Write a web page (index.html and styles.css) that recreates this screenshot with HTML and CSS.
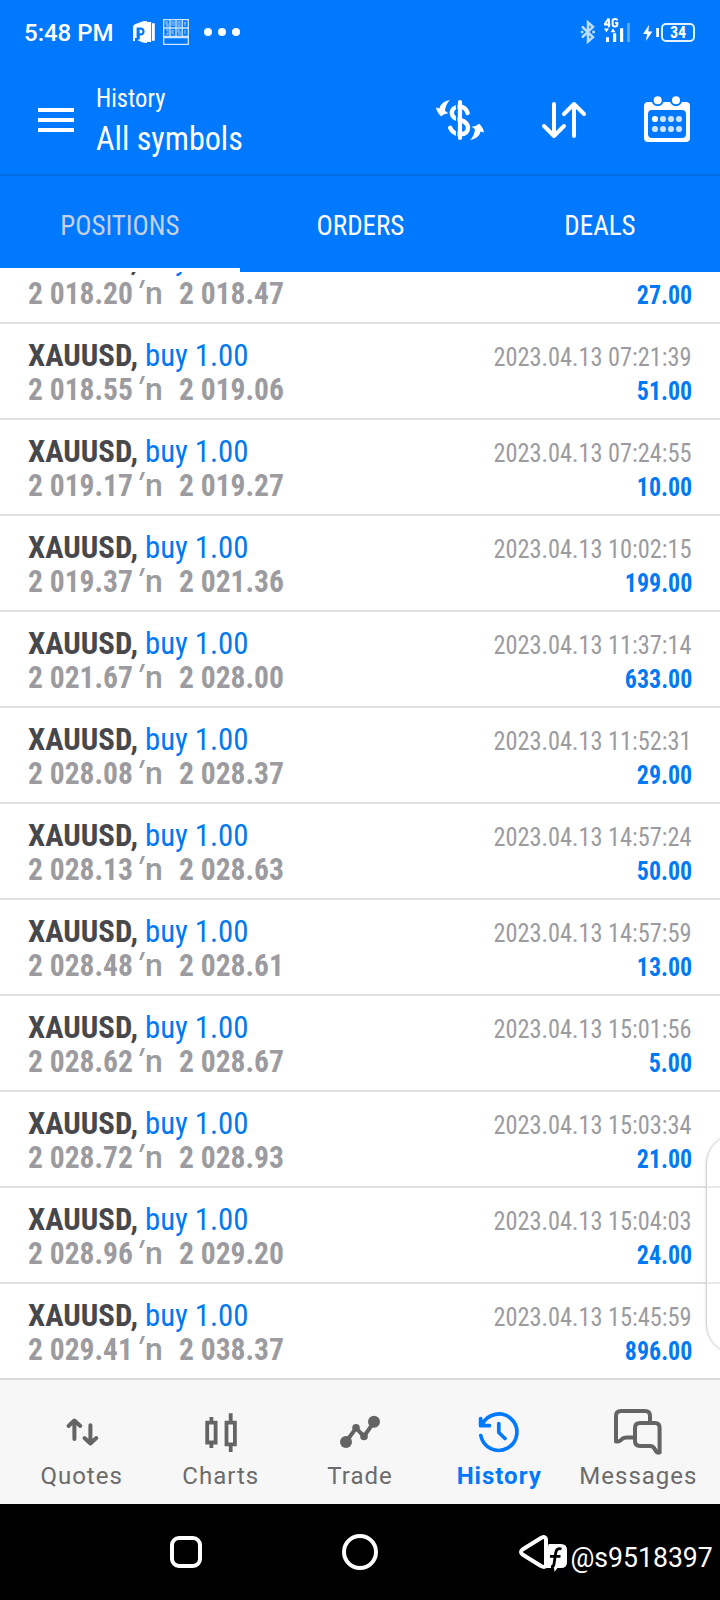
FILE: index.html
```html
<!DOCTYPE html>
<html lang="en">
<head>
<meta charset="utf-8">
<title>History</title>
<link rel="stylesheet" href="styles.css">
</head>
<body>
<div class="screen">
  <div class="status">
    <div class="status-left">
      <span class="clock">5:48 PM</span>
      <svg class="ic-p" width="24" height="26" viewBox="0 0 24 26">
        <path d="M3 5.200L11 2.200 15 2V24L11 23.600 6 21.600V19H3V22H1V7Z" fill="#fff"/>
        <path d="M4.600 8.500h4.600q3.400.4 3.400 4t-3.400 4H7.800V20.500H4.600Z" fill="#0079ff"/>
        <path d="M7.600 10.800h1.600q1.200.2 1.200 1.700t-1.200 1.700H7.600Z" fill="#fff"/>
        <path d="M15 3h4.200v20h-4.200ZM20 4.200h2.800v17.600H20Z" fill="#fff"/>
      </svg>
      <svg class="ic-keys" width="26" height="26" viewBox="0 0 26 26" fill="none" stroke="#cfe5ff" stroke-width="1.300">
        <path d="M.7.7H25.300V25.300H.7ZM.7 9H25.300M.7 17.300H25.300M7 .7V17.300M13 .7V17.300M19.200 .7V17.300M.7 18.600H25.300"/>
        <path opacity=".6" d="M5 3H3v2h2v2H3M9 7V3h2v4M15 3v4h2V3ZM21 3l1 2 1-2M22 5v2M3 11h2v4H3M9 11v4M11 11l-2 2 2 2M17 11h-2v2h2v2h-2M22 11v4"/>
      </svg>
      <svg class="ic-dots" width="36" height="8" viewBox="0 0 36 8" fill="#fff"><circle cx="4" cy="4" r="4"/><circle cx="18" cy="4" r="4"/><circle cx="32" cy="4" r="4"/></svg>
    </div>
    <div class="status-right">
      <svg width="16" height="24" viewBox="0 0 16 24" fill="none" stroke="#bddcff" stroke-width="2.500"><path d="M2 6.500L13 17.200 8 21.500V2.500L13 6.800 2 17.500"/><path d="M.8 12h2.600M12.200 12H15"/></svg>
      <svg class="ic-signal" width="27" height="26" viewBox="0 0 27 26" fill="#fff">
        <path d="M4.600 .5L1 5.800V6.600H6.200M4.900 .5V9.200M13.300 2.500Q13 1 11 1 8.600 1 8.600 3.300V6.300Q8.600 8.500 11 8.500 13.300 8.500 13.300 6.500V5H11" fill="none" stroke="#fff" stroke-width="2"/>
        <path d="M0 10.500H5L2.500 14.300ZM6.500 14.300H11.500L9 10.500Z"/>
        <path d="M2 19.300h3V24H2ZM9 15.300h3.200V24H9ZM16 10.300h3.200V24H16Z"/>
        <path d="M23 5h3v19h-3Z" opacity=".35"/>
      </svg>
      <svg class="ic-bolt" width="17" height="20" viewBox="0 0 17 20" fill="#fff"><path d="M6 2L0 11H4L3 18 9.400 8.600H5.400Z"/><path d="M13.200 5h2.800v9h-2.800Z"/></svg>
      <span class="battery">34</span>
    </div>
  </div>

  <header class="bar">
    <svg width="36" height="24" viewBox="0 0 36 24" fill="#fff"><path d="M0 0h36v4H0ZM0 10h36v4H0ZM0 20h36v4H0Z"/></svg>
    <div class="titles">
      <div class="subtitle">History</div>
      <div class="title">All symbols</div>
    </div>
    <div class="actions">
      <svg width="48" height="48" viewBox="0 0 48 48">
        <path d="M31.600 17Q29.500 10.600 24 10.600C19.500 10.600 15.800 12.800 15.800 17C15.800 21.500 20 23 24 24C28.500 25.200 32 27 32 31.500C32 36.500 28.500 38.300 24 38.300Q17 38 14.200 31.800" fill="none" stroke="#fff" stroke-width="4.400" stroke-linecap="round"/>
        <path d="M20.700 6V42" stroke="#0079ff" stroke-width="1.600"/>
        <path d="M24 6V42" stroke="#fff" stroke-width="4.200" stroke-linecap="round"/>
        <g fill="#fff"><path id="swap" d="M13.800 4C8 5 4 8.500 3.600 12.500L0 11.600Q1 17 5 20.300Q8 17.500 12.300 17.200L9 14.800Q9.600 8.500 13.800 4Z"/><use href="#swap" transform="rotate(180 24 24)"/></g>
      </svg>
      <svg width="48" height="48" viewBox="0 0 48 48" fill="none" stroke="#fff" stroke-width="4" stroke-linecap="round" stroke-linejoin="round"><path d="M14 8V40M4 30L14 40 24 30M34 40V8M24 18L34 8 44 18"/></svg>
      <svg class="ic-cal" width="48" height="48" viewBox="0 0 48 48">
        <rect x="1" y="6" width="46" height="40" rx="4" fill="#fff"/>
        <rect x="5" y="14" width="38" height="28" rx="4" fill="#0079ff"/>
        <g fill="#fff" stroke="#0079ff" stroke-width="2"><circle cx="14.700" cy="4.200" r="5"/><circle cx="33" cy="4.200" r="5"/></g>
        <g fill="#c8e2ff"><circle cx="12" cy="23" r="3.100" fill="#fff"/><circle cx="20" cy="23" r="3.100"/><circle cx="28" cy="23" r="3.100"/><circle cx="36" cy="23" r="3.100"/><circle cx="12" cy="33" r="3.100"/><circle cx="20" cy="33" r="3.100"/><circle cx="28" cy="33" r="3.100"/><circle cx="36" cy="33" r="3.100"/></g>
      </svg>
    </div>
  </header>

  <nav class="tabs">
    <div class="tab tab-on"><span>POSITIONS</span></div>
    <div class="tab"><span>ORDERS</span></div>
    <div class="tab"><span>DEALS</span></div>
  </nav>

  <main class="list">
    <div class="row"><div class="line"><b class="sym">XAUUSD,</b><span class="side">buy 1.00</span></div><div class="line"><span class="price">2 018.20</span><span class="to"><i>′</i>n</span><span class="price">2 018.47</span><b class="profit">27.00</b></div></div>
    <div class="row"><div class="line"><b class="sym">XAUUSD,</b><span class="side">buy 1.00</span><span class="time">2023.04.13 07:21:39</span></div><div class="line"><span class="price">2 018.55</span><span class="to"><i>′</i>n</span><span class="price">2 019.06</span><b class="profit">51.00</b></div></div>
    <div class="row"><div class="line"><b class="sym">XAUUSD,</b><span class="side">buy 1.00</span><span class="time">2023.04.13 07:24:55</span></div><div class="line"><span class="price">2 019.17</span><span class="to"><i>′</i>n</span><span class="price">2 019.27</span><b class="profit">10.00</b></div></div>
    <div class="row"><div class="line"><b class="sym">XAUUSD,</b><span class="side">buy 1.00</span><span class="time">2023.04.13 10:02:15</span></div><div class="line"><span class="price">2 019.37</span><span class="to"><i>′</i>n</span><span class="price">2 021.36</span><b class="profit">199.00</b></div></div>
    <div class="row"><div class="line"><b class="sym">XAUUSD,</b><span class="side">buy 1.00</span><span class="time">2023.04.13 11:37:14</span></div><div class="line"><span class="price">2 021.67</span><span class="to"><i>′</i>n</span><span class="price">2 028.00</span><b class="profit">633.00</b></div></div>
    <div class="row"><div class="line"><b class="sym">XAUUSD,</b><span class="side">buy 1.00</span><span class="time">2023.04.13 11:52:31</span></div><div class="line"><span class="price">2 028.08</span><span class="to"><i>′</i>n</span><span class="price">2 028.37</span><b class="profit">29.00</b></div></div>
    <div class="row"><div class="line"><b class="sym">XAUUSD,</b><span class="side">buy 1.00</span><span class="time">2023.04.13 14:57:24</span></div><div class="line"><span class="price">2 028.13</span><span class="to"><i>′</i>n</span><span class="price">2 028.63</span><b class="profit">50.00</b></div></div>
    <div class="row"><div class="line"><b class="sym">XAUUSD,</b><span class="side">buy 1.00</span><span class="time">2023.04.13 14:57:59</span></div><div class="line"><span class="price">2 028.48</span><span class="to"><i>′</i>n</span><span class="price">2 028.61</span><b class="profit">13.00</b></div></div>
    <div class="row"><div class="line"><b class="sym">XAUUSD,</b><span class="side">buy 1.00</span><span class="time">2023.04.13 15:01:56</span></div><div class="line"><span class="price">2 028.62</span><span class="to"><i>′</i>n</span><span class="price">2 028.67</span><b class="profit">5.00</b></div></div>
    <div class="row"><div class="line"><b class="sym">XAUUSD,</b><span class="side">buy 1.00</span><span class="time">2023.04.13 15:03:34</span></div><div class="line"><span class="price">2 028.72</span><span class="to"><i>′</i>n</span><span class="price">2 028.93</span><b class="profit">21.00</b></div></div>
    <div class="row"><div class="line"><b class="sym">XAUUSD,</b><span class="side">buy 1.00</span><span class="time">2023.04.13 15:04:03</span></div><div class="line"><span class="price">2 028.96</span><span class="to"><i>′</i>n</span><span class="price">2 029.20</span><b class="profit">24.00</b></div></div>
    <div class="row"><div class="line"><b class="sym">XAUUSD,</b><span class="side">buy 1.00</span><span class="time">2023.04.13 15:45:59</span></div><div class="line"><span class="price">2 029.41</span><span class="to"><i>′</i>n</span><span class="price">2 038.37</span><b class="profit">896.00</b></div></div>
  </main>

  <nav class="bottom">
    <div class="item">
      <svg width="48" height="48" viewBox="0 0 48 48" fill="none" stroke="#646464" stroke-width="4" stroke-linecap="round" stroke-linejoin="round"><path d="M16.400 31V12.700M10.500 18L16.400 12.500 22.300 18M32.400 17.300V35.500M26.500 30L32.400 35.500 38.300 30"/></svg>
      <span>Quotes</span>
    </div>
    <div class="item">
      <svg width="48" height="48" viewBox="0 0 48 48" fill="none" stroke="#646464" stroke-width="3.800"><path d="M10.200 14.700H18.600V34.500H10.200ZM29.500 14.700H37.900V36.300H29.500ZM14.400 9V14M14.400 35V40M33.700 5.300V14M33.700 37V44"/></svg>
      <span>Charts</span>
    </div>
    <div class="item">
      <svg width="48" height="48" viewBox="0 0 48 48" fill="#646464"><path d="M10 34L20 20 28 28.300 38 14" fill="none" stroke="#646464" stroke-width="4"/><circle cx="10" cy="34" r="6"/><circle cx="20" cy="19.800" r="3.800"/><circle cx="28" cy="28.400" r="3.800"/><circle cx="38" cy="13.700" r="6"/></svg>
      <span>Trade</span>
    </div>
    <div class="item item-on">
      <svg width="48" height="48" viewBox="0 0 48 48" fill="none" stroke="#0079ff" stroke-width="3.700" stroke-linecap="round" stroke-linejoin="round"><path d="M5.800 27.500A18.200 18.200 0 1 0 7.200 16.500M5.600 10.500V17.700H14.500M23.800 15.500V24.500L30 30.500"/></svg>
      <span>History</span>
    </div>
    <div class="item">
      <svg width="48" height="48" viewBox="0 0 48 48" fill="none" stroke="#646464" stroke-width="4" stroke-linejoin="round"><path d="M36 14V8Q36 3 31 3H7Q2 3 2 8V33.500Q6 34 8 31 9.500 29.500 13 29.500H20"/><path d="M26 15H41Q45.600 15 45.600 20V44.500Q43 45.500 41 41.500 39.500 38 36 38H26Q21 38 21 33V20Q21 15 26 15Z"/></svg>
      <span>Messages</span>
    </div>
  </nav>

  <div class="sys">
    <svg width="40" height="40" viewBox="0 0 40 40" fill="none" stroke="#fff" stroke-width="4"><rect x="6" y="6" width="28" height="28" rx="7"/></svg>
    <svg width="40" height="40" viewBox="0 0 40 40" fill="none" stroke="#fff" stroke-width="4"><circle cx="20" cy="20" r="16"/></svg>
    <svg width="40" height="40" viewBox="0 0 40 40" fill="none" stroke="#fff" stroke-width="4" stroke-linejoin="round"><path d="M8.500 17.500L27 6Q32 3.500 32 8V32Q32 36.500 27 34L8.500 22.500Q5.500 20 8.500 17.500Z"/></svg>
  </div>

  <div class="mark">
    <svg width="24" height="28" viewBox="0 0 24 28">
      <path d="M6 0H18Q24 0 24 6V18Q24 24 18 24H14.500L11.500 27.800 11 24H3Q5 20 5 16V6Q5 0 6 0Z" fill="#fff"/>
      <path d="M18.500 5Q13.500 3.500 12.700 9L11 20Q10.600 23 8 23M7 12.300H17.500" fill="none" stroke="#000" stroke-width="2.800"/>
    </svg>
    <span>@s9518397</span>
  </div>
  <div class="edge"></div>
</div>
</body>
</html>
```
FILE: styles.css
```css
* { box-sizing: border-box; }
body { margin: 0; font-family: "Roboto Condensed", Roboto, sans-serif; }
svg { display: block; flex: none; overflow: visible; }

.screen {
  position: relative;
  display: flex;
  flex-direction: column;
  width: 720px;
  height: 1600px;
  overflow: hidden;
  background: #fff;
}

.status {
  display: flex;
  justify-content: space-between;
  height: 64px;
  padding: 0 25px 0 24px;
  background: #0079ff;
  color: #fff;
  font-family: Roboto, sans-serif;
}
.status-left, .status-right { display: flex; align-items: center; }
.clock { width: 108px; padding-top: 1px; font-size: 24px; font-weight: 500; line-height: 64px; }
.ic-keys { margin-left: 7px; }
.ic-dots { margin-left: 15px; }
.ic-signal { margin: 0 0 2px 8px; }
.ic-bolt { margin: 1px 0 0 12px; }
.battery {
  width: 34px;
  height: 19px;
  margin-left: 1px;
  border: 2px solid #e4f1ff;
  border-radius: 5px;
  font: 700 16px/15px "Roboto Condensed", sans-serif;
  text-align: center;
}

.bar {
  display: flex;
  align-items: center;
  height: 112px;
  padding: 0 29px 0 38px;
  background: #0079ff;
  border-bottom: 2px solid #006ce4;
  color: #fff;
}
.bar > svg { margin-top: 2px; }
.titles { margin: 0 0 2px 22px; line-height: 40px; }
.subtitle, .title { transform: scaleX(.945); transform-origin: left; }
.subtitle { font-size: 26px; }
.title { padding-top: 1px; font-size: 34px; line-height: 39px; }
.actions { display: flex; gap: 56px; margin: 2px 0 0 auto; }
.ic-cal { margin-left: -1px; }

.tabs { display: grid; grid-template-columns: repeat(3, 1fr); height: 96px; background: #0079ff; color: #fff; }
.tab { padding-top: 7px; border-bottom: 4px solid transparent; font-size: 28px; line-height: 85px; text-align: center; }
.tab span { display: inline-block; transform: scaleX(.965); }
.tab-on { border-bottom-color: #fff; color: #c4d0e4; }

.list { display: flex; flex-direction: column; justify-content: flex-end; height: 1108px; overflow: hidden; }
.row { flex: none; height: 96px; padding: 14px 28px 0; border-bottom: 2px solid #e1e1e1; }
.row:last-child { border-bottom-color: #dadada; }
.line { display: flex; align-items: baseline; height: 34px; font-size: 32px; line-height: 34px; white-space: nowrap; }

/* Tighter than the condensed face's own width */
.sym, .side, .price { transform: scaleX(.96); transform-origin: left; }
.time, .profit { margin-left: auto; font-size: 26px; transform: scaleX(.936); transform-origin: right; }

.sym { width: 117px; color: #48484c; }
.side { color: #0079f4; }
.price { width: 111px; color: #9b9ba0; font-weight: 700; transform: scaleX(.923); }
.to { width: 40px; color: #9b9ba0; font: 500 32px/34px Roboto, sans-serif; }
.to i { display: inline-block; width: 6px; font-style: normal; transform: translateX(-3px) skewX(-20deg); }
.time { color: #9b9ba0; }
.profit { color: #0079f4; transform: scaleX(.92); }

.bottom { display: grid; grid-template-columns: repeat(5, 1fr); height: 124px; padding: 28px 12px 0; background: #f7f7f7; }
.item { display: flex; flex-direction: column; align-items: center; gap: 2px; color: #6b6b6b; font: 400 24px/36px Roboto, sans-serif; letter-spacing: 1px; }
.item-on { color: #0079ff; font-weight: 700; }

.sys { display: grid; grid-template-columns: repeat(3, 174px); justify-content: center; place-items: center; height: 96px; background: #000; }

.mark {
  position: absolute;
  right: 7px;
  bottom: 28px;
  display: flex;
  align-items: center;
  color: #fff;
  font: 400 28px/28px Roboto, sans-serif;
}
.mark svg { margin-right: -4px; }
.mark span { transform: scaleX(.95); transform-origin: right; }
.edge {
  position: absolute;
  left: 706px;
  top: 1134px;
  width: 60px;
  height: 220px;
  border: 1px solid #d4d4d4;
  border-radius: 30px;
  background: rgba(255, 255, 255, .3);
  box-shadow: 0 0 3px rgba(0, 0, 0, .15);
}
```
